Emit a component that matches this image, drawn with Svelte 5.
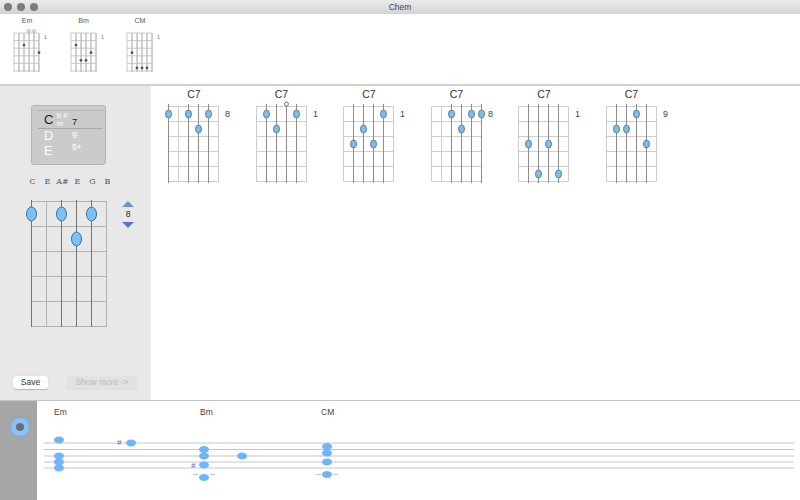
<script>
  const top = [
    { name: 'Em', open: [3, 4], dots: [[2, 1], [5, 2]], dark: [1, 2, 3, 4, 5] },
    { name: 'Bm', open: [], dots: [[1, 1], [4, 2], [2, 3], [3, 3]], dark: [1, 2, 3, 4, 5] },
    { name: 'CM', open: [], dots: [[1, 2], [2, 4], [3, 4], [4, 4]], dark: [1, 2, 3, 4, 5] }
  ];
  const chords = [
    { fret: 8, open: [], dots: [[0, 0], [2, 0], [4, 0], [3, 1]], dark: [0, 2, 3, 4] },
    { fret: 1, open: [3], dots: [[1, 0], [4, 0], [2, 1]], dark: [1, 2, 3, 4] },
    { fret: 1, open: [], dots: [[4, 0], [2, 1], [1, 2], [3, 2]], dark: [1, 2, 3, 4] },
    { fret: 8, open: [], dots: [[2, 0], [4, 0], [5, 0], [3, 1]], dark: [2, 3, 4, 5] },
    { fret: 1, open: [], dots: [[1, 2], [3, 2], [2, 4], [4, 4]], dark: [1, 2, 3, 4] },
    { fret: 9, open: [], dots: [[3, 0], [1, 1], [2, 1], [4, 2]], dark: [1, 2, 3, 4] }
  ];
  const strings = [0, 1, 2, 3, 4, 5];
  const notes = ['C', 'E', 'A#', 'E', 'G', 'B'];
  const staff = [443, 449.5, 456, 462, 468];
  const heads = [
    [59, 440], [59, 456], [59, 462], [59, 468], [131, 443],
    [204, 449.5], [204, 456], [204, 465], [204, 477.5], [242, 456],
    [327, 446.5], [327, 453], [327, 462], [327, 474.5]
  ];
</script>

{#snippet tiny(c)}
  <figure class="tiny">
    <figcaption>{c.name}</figcaption>
    <svg width="36" height="46" viewBox="0 0 36 46">
      {#each strings as s}
        <line x1={1 + s * 5} x2={1 + s * 5} y1="6" y2="45" stroke={c.dark.includes(s) ? '#8a8a8a' : '#bbb'} stroke-width="0.8" />
      {/each}
      {#each [0, 1, 2, 3, 4, 5] as f}
        <line x1="1" x2="26" y1={6 + f * 7.6} y2={6 + f * 7.6} stroke="#bbb" stroke-width="0.8" />
      {/each}
      {#each c.open as o}
        <circle cx={1 + o * 5} cy="4" r="1.4" fill="#fff" stroke="#777" stroke-width="0.6" />
      {/each}
      {#each c.dots as d}
        <circle cx={1 + d[0] * 5} cy={3.5 + d[1] * 7.6 + 7} r="1.4" fill="#555" />
      {/each}
      <text x="31" y="11.5" class="tf">1</text>
    </svg>
  </figure>
{/snippet}

{#snippet chord(c)}
  <figure class="chord">
    <figcaption>C7</figcaption>
    <svg width="72" height="84" viewBox="0 0 72 84">
      {#each strings as s}
        <line x1={0.5 + s * 10} x2={0.5 + s * 10} y1="3" y2="79" stroke="#cdcdcd" />
      {/each}
      {#each [0, 1, 2, 3, 4, 5] as f}
        <line x1="0" x2="51" y1={3.5 + f * 15} y2={3.5 + f * 15} stroke="#cdcdcd" />
      {/each}
      {#each c.dark as s}
        <line x1={0.5 + s * 10} x2={0.5 + s * 10} y1="1" y2="80" stroke="#8c8c8c" />
      {/each}
      {#each c.open as o}
        <circle cx={0.5 + o * 10} cy="1" r="2" fill="#fff" stroke="#555" stroke-width="0.8" />
      {/each}
      {#each c.dots as d}
        <ellipse cx={0.5 + d[0] * 10} cy={11 + d[1] * 15} rx="3" ry="4" fill="#7fbcec" stroke="#40709a" stroke-width="0.8" />
      {/each}
      <text x="57" y="14" class="fn">{c.fret}</text>
    </svg>
  </figure>
{/snippet}

<div class="window">
  <header class="titlebar">
    <div class="lights"><i></i><i></i><i></i></div>
    <span>Chem</span>
  </header>

  <section class="library">
    {#each top as c}{@render tiny(c)}{/each}
  </section>

  <main class="middle">
    <aside class="sidebar">
      <div class="picker">
        <div class="rule first"></div>
        <div class="rule second"></div>
        <div class="col roots"><b class="on">C</b><b>D</b><b>E</b></div>
        <div class="col marks"><span>b #</span><span>m</span></div>
        <div class="col exts"><span class="on">7</span><span>9</span><span class="plus">9+</span></div>
      </div>

      <div class="notes">
        {#each notes as n}<span>{n}</span>{/each}
      </div>

      <div class="editor">
        <svg width="84" height="130" viewBox="0 0 84 130">
          {#each strings as s}
            <line x1={0.5 + s * 15} x2={0.5 + s * 15} y1="1.5" y2="127" stroke="#b2b2b2" />
          {/each}
          {#each [0, 1, 2, 3, 4, 5] as f}
            <line x1="0" x2="76" y1={1.5 + f * 25} y2={1.5 + f * 25} stroke="#b2b2b2" />
          {/each}
          {#each [0, 2, 3, 4] as s}
            <line x1={0.5 + s * 15} x2={0.5 + s * 15} y1="0" y2="127" stroke="#757575" />
          {/each}
          {#each [[0, 14], [2, 14], [4, 14], [3, 39]] as d}
            <ellipse cx={0.5 + d[0] * 15} cy={d[1]} rx="5" ry="7" fill="#7cc0f8" stroke="#41719c" />
          {/each}
        </svg>
        <div class="stepper">
          <svg width="12" height="6" viewBox="0 0 12 6"><path d="M0 6 6 0l6 6z" fill="#6e8fd0" /></svg>
          <span>8</span>
          <svg width="12" height="6" viewBox="0 0 12 6"><path d="M0 0h12L6 6z" fill="#5577cc" /></svg>
        </div>
      </div>

      <div class="actions">
        <button class="save">Save</button>
        <button class="more" disabled>Show more -&gt;</button>
      </div>
    </aside>

    <div class="results">
      {#each chords as c}{@render chord(c)}{/each}
    </div>
  </main>

  <footer class="score">
    <div class="rail">
      <div class="record"><i></i></div>
    </div>
    <div class="sheet">
      <svg width="763" height="99" viewBox="37 401 763 99">
        {#each staff as y}
          <line x1="44" x2="794" y1={y} y2={y} stroke="#c6c6c6" />
        {/each}
        <line x1="193" x2="215" y1="474.5" y2="474.5" stroke="#c6c6c6" stroke-dasharray="5 12" />
        <line x1="316" x2="338" y1="474.5" y2="474.5" stroke="#c6c6c6" stroke-dasharray="5 12" />
        {#each heads as h}
          <ellipse cx={h[0]} cy={h[1]} rx="5" ry="3.4" fill="#6db6fb" />
        {/each}
        <text x="54" y="415" class="lbl">Em</text>
        <text x="200" y="415" class="lbl">Bm</text>
        <text x="321" y="415" class="lbl">CM</text>
        <text x="117" y="445" class="acc">#</text>
        <text x="191" y="468" class="acc">#</text>
      </svg>
    </div>
  </footer>
</div>

<style>
  :global(body) { margin: 0; background: #fff; }
  .window {
    width: 800px;
    height: 500px;
    display: flex;
    flex-direction: column;
    overflow: hidden;
    font-family: "Liberation Sans", Arial, sans-serif;
    color: #333;
  }
  svg { overflow: visible; }
  .titlebar {
    height: 14px;
    flex: none;
    display: flex;
    align-items: center;
    justify-content: center;
    position: relative;
    background: linear-gradient(#ebebeb, #d3d3d3);
    font-size: 8.5px;
    color: #444;
  }
  .lights {
    position: absolute;
    left: 4px;
    top: 3px;
    display: flex;
    gap: 5px;
  }
  .lights i {
    width: 8px;
    height: 8px;
    border-radius: 50%;
    background: #7c7c7c;
  }
  .library {
    height: 70px;
    flex: none;
    display: flex;
    background: #fff;
    border-bottom: 2px solid #cfcfcf;
    padding-left: 13px;
    gap: 20.5px;
  }
  figure { margin: 0; }
  .tiny {
    width: 36px;
    padding-top: 3px;
  }
  .tiny figcaption {
    font-size: 7px;
    text-align: center;
    width: 28px;
    line-height: 8px;
    color: #555;
  }
  .tiny svg { display: block; margin-top: 2px; }
  .tf { font-size: 5px; fill: #666; }
  .middle {
    height: 314px;
    flex: none;
    display: flex;
  }
  .sidebar {
    width: 151px;
    flex: none;
    background: #e8e8e8;
    display: flex;
    flex-direction: column;
    padding: 19px 0 0 31px;
    box-sizing: border-box;
  }
  .picker {
    width: 75px;
    height: 60px;
    box-sizing: border-box;
    position: relative;
    background: #cbcbcb;
    border: 1px solid #b4b4b4;
    border-radius: 3px;
    color: #fff;
    flex: none;
  }
  .rule {
    position: absolute;
    left: 6px;
    right: 2px;
    height: 1px;
    background: #a8a8a8;
  }
  .rule.first { top: 4px; background: #b4b4b4; }
  .rule.second { top: 22px; }
  .col { position: absolute; display: flex; flex-direction: column; }
  .roots {
    left: 12px;
    top: 6px;
    font-size: 13px;
    line-height: 15.5px;
  }
  .roots b { font-weight: 400; }
  .on { color: #222; }
  .marks {
    left: 25px;
    top: 6px;
    font-size: 7.5px;
    line-height: 8px;
    white-space: nowrap;
  }
  .exts {
    left: 40px;
    top: 9px;
    font-size: 9.5px;
    line-height: 13px;
  }
  .plus { font-size: 8.5px; }
  .notes {
    display: flex;
    width: 90px;
    margin: 11px 0 0 -6px;
    height: 11px;
    font-family: "DejaVu Serif", "Liberation Serif", serif;
    font-size: 8px;
    line-height: 11px;
    color: #555;
    flex: none;
  }
  .notes span { width: 15px; text-align: center; }
  .editor {
    display: flex;
    margin: 13px 0 0 0;
    height: 130px;
    flex: none;
  }
  .editor svg { display: block; }
  .stepper {
    display: flex;
    flex-direction: column;
    align-items: center;
    width: 12px;
    margin: 1px 0 0 7px;
  }
  .stepper svg { flex: none; }
  .stepper span {
    height: 15px;
    font-size: 8.5px;
    line-height: 15px;
    color: #222;
  }
  .actions {
    display: flex;
    gap: 19px;
    margin: 46px 0 0 -18px;
  }
  button {
    height: 13px;
    padding: 0;
    border: 0;
    border-radius: 3px;
    font-family: inherit;
    font-size: 8.5px;
    line-height: 13px;
  }
  .save {
    width: 35px;
    background: #fff;
    color: #333;
    box-shadow: 0 0.5px 1px #b5b5b5;
  }
  .more {
    width: 70px;
    background: #e2e2e2;
    color: #b9b9b9;
    box-shadow: 0 0.5px 0.5px #d4d4d4;
  }
  .results {
    flex: 1;
    display: flex;
    padding: 2px 0 0 17px;
    gap: 15.5px;
    background: #fff;
  }
  .chord { width: 72px; }
  .chord figcaption {
    font-size: 10.5px;
    line-height: 12px;
    width: 52px;
    text-align: center;
    color: #333;
  }
  .chord svg { display: block; margin-top: 3px; }
  .fn { font-size: 9px; fill: #444; }
  .score {
    flex: 1;
    display: flex;
    border-top: 1px solid #c4c4c4;
    min-height: 0;
  }
  .rail {
    width: 37px;
    flex: none;
    background: #a6a6a6;
    padding: 16px 0 0 9.5px;
    box-sizing: border-box;
  }
  .record {
    width: 20px;
    height: 20px;
    box-sizing: border-box;
    border-radius: 50%;
    background: #8cc2fb;
    border: 1px solid #7aa9dd;
    display: flex;
    align-items: center;
    justify-content: center;
  }
  .record i {
    width: 8px;
    height: 8px;
    border-radius: 50%;
    background: #6e6e6e;
  }
  .sheet { flex: 1; background: #fff; }
  .sheet svg { display: block; }
  .lbl { font-size: 8.5px; fill: #444; }
  .acc { font-size: 8px; fill: #5a62b8; font-style: italic; }
</style>
